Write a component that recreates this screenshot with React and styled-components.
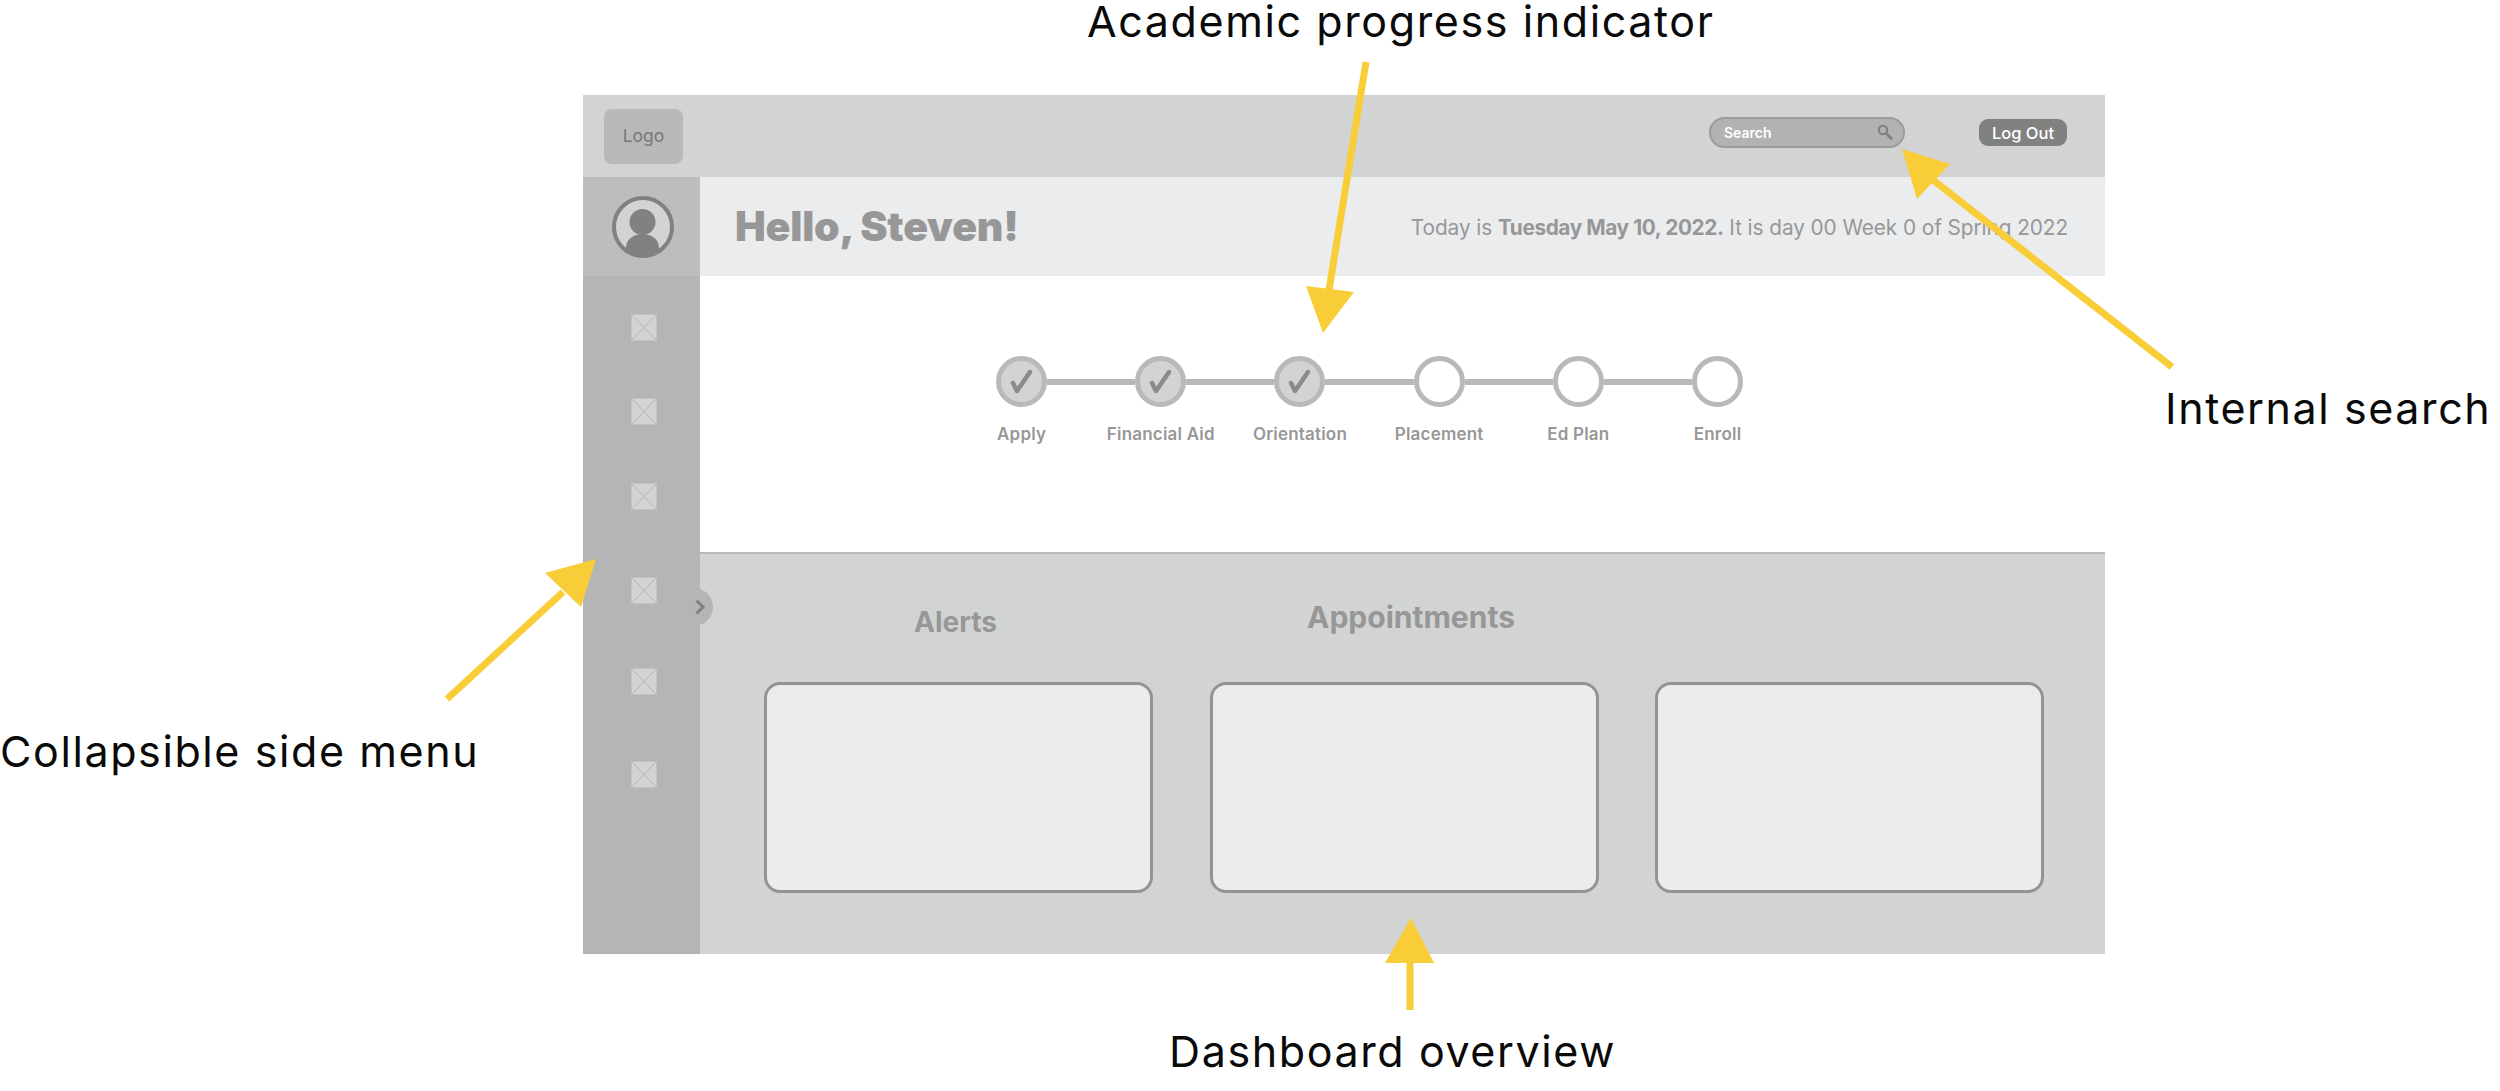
import React from "react";
import styled, { createGlobalStyle } from "styled-components";

const GlobalStyle = createGlobalStyle`
  html, body {
    margin: 0;
    padding: 0;
    background: #fff;
  }
`;

const Page = styled.div`
  position: relative;
  width: 2500px;
  height: 1091px;
  overflow: hidden;
  padding: 95px 0 0 583px;
  box-sizing: border-box;
  background: #fff;
  font-family: Inter, "Open Sans", sans-serif;
`;

const Frame = styled.div`
  display: flex;
  flex-direction: column;
  width: 1522px;
  height: 859px;
`;

const TopBar = styled.header`
  display: flex;
  align-items: center;
  flex: 0 0 82px;
  padding: 0 38px 0 21px;
  background: #d2d4d3;
`;

const Logo = styled.div`
  display: flex;
  align-items: center;
  justify-content: center;
  width: 79px;
  height: 55px;
  padding-bottom: 2px;
  box-sizing: border-box;
  border-radius: 8px;
  background: #b8b9b8;
  color: #777977;
  font-size: 17.5px;
`;

const SearchBox = styled.div`
  display: flex;
  align-items: center;
  justify-content: space-between;
  box-sizing: border-box;
  width: 196px;
  height: 31px;
  margin: 0 0 7px auto;
  padding: 0 10px 0 13px;
  border: 2px solid #9a9b9a;
  border-radius: 16px;
  background: #b2b2b2;
  color: #fff;
  font-size: 14px;
  font-weight: 600;
`;

const LogOut = styled.button`
  width: 88px;
  height: 27px;
  margin: 0 0 7px 74px;
  padding: 0;
  border: 0;
  border-radius: 9px;
  background: #808280;
  color: #fff;
  font-family: inherit;
  font-size: 16.5px;
  font-weight: 500;
`;

const Body = styled.div`
  display: flex;
  flex: 1;
  min-height: 0;
`;

const Rail = styled.aside`
  display: flex;
  flex-direction: column;
  flex: 0 0 117px;
`;

const AvatarCell = styled.div`
  display: flex;
  align-items: center;
  justify-content: center;
  flex: 0 0 99px;
  padding-left: 3px;
  background: #bdbdbd;
`;

const SideMenu = styled.nav`
  position: relative;
  display: flex;
  flex-direction: column;
  flex: 1;
  padding: 38px 0 0 48px;
  background: #b5b5b5;
`;

const MenuIcon = styled.svg`
  display: block;
  width: 26px;
  height: 27px;
  margin-top: ${(p) => p.$gap}px;
`;

const CollapseTab = styled.button`
  position: absolute;
  top: 312px;
  right: -13px;
  display: flex;
  align-items: center;
  justify-content: center;
  width: 38px;
  height: 38px;
  padding: 0 0 0 12px;
  border: 0;
  border-radius: 50%;
  background: #b5b5b5;
`;

const Content = styled.main`
  display: flex;
  flex-direction: column;
  flex: 1;
  min-width: 0;
`;

const GreetingBar = styled.div`
  display: flex;
  align-items: center;
  justify-content: space-between;
  flex: 0 0 99px;
  box-sizing: border-box;
  padding: 0 37px 0 35px;
  background: #ebecee;
  color: #979797;
`;

const Hello = styled.h1`
  margin: 0 0 2px;
  font-size: 41px;
  font-weight: 900;
  letter-spacing: -0.2px;
`;

const DateLine = styled.p`
  margin: 2px 0 0;
  font-size: 20.8px;
  letter-spacing: -0.08px;

  b {
    font-weight: 700;
    letter-spacing: -0.4px;
  }
`;

const ProgressPanel = styled.section`
  flex: 0 0 276px;
  box-sizing: border-box;
  padding: 80px 0 0 296px;
  background: #fff;
`;

const Track = styled.div`
  display: flex;
  align-items: center;
  width: 747px;
`;

const StepDot = styled.div`
  display: flex;
  align-items: center;
  justify-content: center;
  flex: 0 0 51px;
  box-sizing: border-box;
  height: 51px;
  border: 5px solid #b9b9b9;
  border-radius: 50%;
  background: ${(p) => (p.$done ? "#d2d4d3" : "#fff")};
`;

const Connector = styled.div`
  flex: 1;
  height: 6px;
  background: #b9b9b9;
`;

const StepLabels = styled.div`
  display: grid;
  grid-template-columns: repeat(6, 139.2px);
  margin: 17px 0 0 -44px;
`;

const StepLabel = styled.span`
  color: #979797;
  font-size: 17px;
  font-weight: 600;
  letter-spacing: 0.2px;
  text-align: center;
`;

const Dashboard = styled.section`
  display: grid;
  grid-template-columns: repeat(3, 389px);
  column-gap: 56.5px;
  flex: 1;
  padding-left: 64px;
  border-top: 2px solid #b9b9b9;
  background: #d2d4d3;
`;

const Column = styled.div`
  display: flex;
  flex-direction: column;
`;

const ColumnTitle = styled.h2`
  box-sizing: border-box;
  height: 128px;
  margin: 0;
  padding: ${(p) => p.$top}px ${(p) => p.$right || 0}px 0 ${(p) => p.$left || 0}px;
  color: #979797;
  font-size: ${(p) => p.$size}px;
  font-weight: 700;
  line-height: 34px;
  text-align: center;
`;

const Card = styled.div`
  box-sizing: border-box;
  height: 211px;
  border: 3px solid #939393;
  border-radius: 16px;
  background: #ebecee;
`;

const Arrows = styled.svg`
  position: absolute;
  top: 0;
  left: 0;
  width: 2500px;
  height: 1091px;
  pointer-events: none;
`;

const Note = styled.div`
  position: absolute;
  left: ${(p) => p.$x}px;
  top: ${(p) => p.$y}px;
  color: #0a0a0a;
  font-size: 43px;
  line-height: 42px;
  letter-spacing: 1.6px;
  white-space: nowrap;
`;

const ARROW_COLOR = "#f8cd38";

const arrows = [
  { line: [1366, 62, 1329, 290], head: "1306,286 1354,292 1323,333" },
  { line: [2172, 367, 1933, 180], head: "1902,149 1950,164 1917,199" },
  { line: [447, 699, 563, 592], head: "596,559 545,573 581,607" },
  { line: [1410, 1010, 1410, 960], head: "1411,918 1385,963 1434,963" },
];

const notes = [
  { text: "Academic progress indicator", x: 1087, y: 0 },
  { text: "Internal search", x: 2165, y: 387 },
  { text: "Collapsible side menu", x: 0, y: 730 },
  { text: "Dashboard overview", x: 1169, y: 1030 },
];

const menuGaps = [0, 57, 58, 67, 64, 66];

const steps = [
  { label: "Apply", done: true },
  { label: "Financial Aid", done: true },
  { label: "Orientation", done: true },
  { label: "Placement" },
  { label: "Ed Plan" },
  { label: "Enroll" },
];

const PlaceholderIcon = ({ gap }) => (
  <MenuIcon $gap={gap} viewBox="0 0 26 27">
    <rect x="0.5" y="0.5" width="25" height="26" fill="#d2d4d3" stroke="#c2c3c2" />
    <path d="M1 1 25 26M25 1 1 26" stroke="#b3b4b3" strokeWidth="1" fill="none" />
  </MenuIcon>
);

const Avatar = () => (
  <svg width="62" height="62" viewBox="0 0 62 62">
    <defs>
      <clipPath id="avatar-clip">
        <circle cx="31" cy="31" r="29" />
      </clipPath>
    </defs>
    <circle cx="31" cy="31" r="29" fill="#d2d4d3" stroke="#808280" strokeWidth="4" />
    <g clipPath="url(#avatar-clip)" fill="#808280">
      <circle cx="30.5" cy="26" r="13" />
      <path d="M14 62 V52 C14 43 22 38 30.5 38 C39 38 47 43 47 52 V62 Z" />
    </g>
  </svg>
);

const SearchIcon = () => (
  <svg width="16" height="17" viewBox="0 0 16 17" fill="none" stroke="#808280">
    <circle cx="6" cy="6" r="4.2" strokeWidth="2.2" />
    <path d="M9.5 9.5 15 15.5" strokeWidth="3" />
  </svg>
);

const Check = () => (
  <svg width="26" height="26" viewBox="0 0 26 26" fill="none">
    <path
      d="M4 14 8 22 21 3"
      stroke="#8a8b8a"
      strokeWidth="4.5"
      strokeLinecap="round"
      strokeLinejoin="round"
    />
  </svg>
);

const Chevron = () => (
  <svg width="12" height="16" viewBox="0 0 12 16" fill="none" stroke="#808280" strokeWidth="3">
    <path d="M2.5 1.5 9 8 2.5 14.5" />
  </svg>
);

export default function App() {
  return (
    <Page>
      <GlobalStyle />
      <Frame>
        <TopBar>
          <Logo>Logo</Logo>
          <SearchBox>
            Search
            <SearchIcon />
          </SearchBox>
          <LogOut>Log Out</LogOut>
        </TopBar>
        <Body>
          <Rail>
            <AvatarCell>
              <Avatar />
            </AvatarCell>
            <SideMenu>
              {menuGaps.map((gap, i) => (
                <PlaceholderIcon key={i} gap={gap} />
              ))}
              <CollapseTab>
                <Chevron />
              </CollapseTab>
            </SideMenu>
          </Rail>
          <Content>
            <GreetingBar>
              <Hello>Hello, Steven!</Hello>
              <DateLine>
                Today is <b>Tuesday May 10, 2022.</b> It is day 00 Week 0 of Spring 2022
              </DateLine>
            </GreetingBar>
            <ProgressPanel>
              <Track>
                {steps.map((step, i) => (
                  <React.Fragment key={step.label}>
                    {i > 0 && <Connector />}
                    <StepDot $done={step.done}>{step.done && <Check />}</StepDot>
                  </React.Fragment>
                ))}
              </Track>
              <StepLabels>
                {steps.map((step) => (
                  <StepLabel key={step.label}>{step.label}</StepLabel>
                ))}
              </StepLabels>
            </ProgressPanel>
            <Dashboard>
              <Column>
                <ColumnTitle $top={51} $right={6} $size={28}>
                  Alerts
                </ColumnTitle>
                <Card />
              </Column>
              <Column>
                <ColumnTitle $top={46} $left={14} $size={30}>
                  Appointments
                </ColumnTitle>
                <Card />
              </Column>
              <Column>
                <ColumnTitle $top={46} $size={28} />
                <Card />
              </Column>
            </Dashboard>
          </Content>
        </Body>
      </Frame>
      <Arrows viewBox="0 0 2500 1091">
        {arrows.map(({ line, head }) => (
          <g key={head} fill={ARROW_COLOR} stroke={ARROW_COLOR}>
            <line x1={line[0]} y1={line[1]} x2={line[2]} y2={line[3]} strokeWidth="7" />
            <polygon points={head} stroke="none" />
          </g>
        ))}
      </Arrows>
      {notes.map((note) => (
        <Note key={note.text} $x={note.x} $y={note.y}>
          {note.text}
        </Note>
      ))}
    </Page>
  );
}
